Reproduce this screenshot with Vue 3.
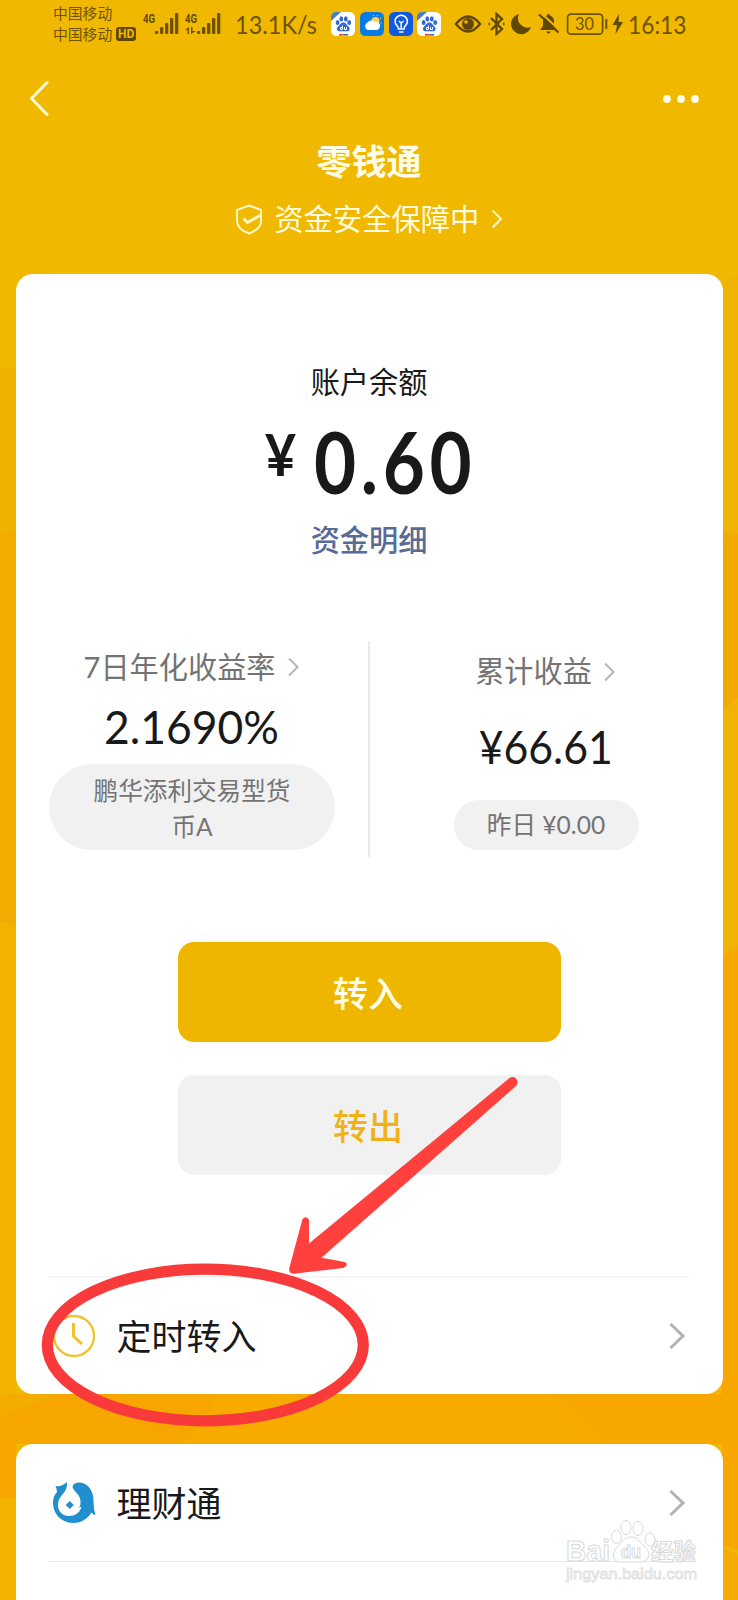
<script setup>
const carriers = ['中国移动', '中国移动']
const bars = [
  { x: 12, h: 3 },
  { x: 17, h: 7 },
  { x: 22, h: 11 },
  { x: 27, h: 16 },
  { x: 32, h: 21 },
]
const apps = ['paw', 'weather', 'bulb', 'paw']
</script>

<template>
  <div class="page">
    <svg class="backdrop" viewBox="0 0 738 1600">
      <rect width="738" height="1600" fill="#f1b800" />
      <path d="M0 367H16V540L0 535z" fill="#f0b200" />
      <path d="M0 535L16 531V926L0 921z" fill="#f2ab00" />
      <path d="M0 921L16 926V1390L0 1416z" fill="#f2b300" />
      <path d="M0 1417L80 1394H738V1444H0z" fill="#f7aa00" />
      <path d="M0 1417L16 1412V1499L0 1498z" fill="#f8a500" />
      <path d="M0 1394H219L185 1444H0z" fill="#f7a600" />
      <path d="M0 1394H60L0 1417z" fill="#f3ac00" />
      <path d="M0 1498H16V1600H0z" fill="#f2b200" />
      <path d="M722 282L738 276V534H722z" fill="#f0b300" />
      <path d="M722 533L738 534V698L722 713z" fill="#f1ab00" />
      <path d="M722 713L738 698V948L722 956z" fill="#f1b300" />
      <path d="M722 956L738 948V1550L722 1545z" fill="#f8a700" />
      <path d="M722 1545L738 1556V1600H722z" fill="#f7ab00" />
      <path d="M555 1394H738V1444H604z" fill="#f8a700" />
    </svg>

    <header class="status">
      <div class="carriers">
        <div v-for="(name, i) in carriers" :key="i" class="carrier">
          <span>{{ name }}</span><b v-if="i === 1">HD</b>
        </div>
      </div>
      <svg v-for="n in 2" :key="n" class="signal" :class="'signal-' + n" width="36" height="26" viewBox="0 0 36 26">
        <text x="0" y="13.500" textLength="12" lengthAdjust="spacingAndGlyphs">4G</text>
        <rect v-for="b in bars" :key="b.x" :x="b.x" :y="25 - b.h" width="3.300" :height="b.h" rx="1" />
        <path v-if="n === 2" d="M0 21L4 18V25H2.500V21zM6 18H7.500V22H11L6 25z" />
      </svg>
      <span class="speed">13.1K/s</span>
      <div class="apps">
        <svg v-for="(app, i) in apps" :key="i" width="24" height="24" viewBox="0 0 24 24">
          <template v-if="app === 'paw'">
            <rect width="24" height="24" rx="5.500" fill="#fff" />
            <path d="M5 0H10L0 9V5.500Q0 0 5 0z" fill="#4a7ec9" />
            <g fill="#3568d4">
              <ellipse cx="6.600" cy="10.500" rx="1.900" ry="2.500" />
              <ellipse cx="10.300" cy="6.900" rx="1.900" ry="2.600" />
              <ellipse cx="14.800" cy="6.900" rx="1.900" ry="2.600" />
              <ellipse cx="18.200" cy="10.500" rx="1.900" ry="2.500" />
              <path d="M12.300 10.500C15 10.500 15.500 13 17.500 14.500C20 17 18 19.500 16 19.300H9C6 19.500 5 17 7 14.800C9 13 9.500 10.500 12.300 10.500z" />
            </g>
            <path d="M11.500 13.500V17.500H9.500V15.500H11.500M13.500 15V17.500H15.500V15" fill="none" stroke="#fff" />
            <path d="M8 22h4.500v1.600H8z" fill="#d83b3b" /><path d="M12.500 22h4.500v1.600h-4.500z" fill="#3568d4" />
          </template>
          <template v-else-if="app === 'weather'">
            <rect width="24" height="24" rx="5.500" fill="#087ce5" />
            <circle cx="15.500" cy="9" r="4" fill="#ffd15b" />
            <path d="M13 4l1-1M17 4l.5-1M20 7l1-1M20.500 11h1" stroke="#ffd15b" />
            <path d="M8 18a4 4 0 0 1-.5-7.500A5 5 0 0 1 15 10a3.500 3.500 0 0 1 2 8z" fill="#fff" />
          </template>
          <template v-else>
            <rect width="24" height="24" rx="5.500" fill="#1259e2" />
            <path d="M9.500 17C9.500 13.500 6 13 6 9.500A6.200 6.200 0 0 1 18.400 9.500C18.400 13 15 13.500 15 17zM10 20H14.500M12.200 16V11L9.800 9M12.200 11L14.600 9" fill="none" stroke="#fff" stroke-width="1.500" />
          </template>
        </svg>
      </div>
      <svg class="glyphs" width="154" height="26" viewBox="454 12 154 26">
        <path d="M456 24Q468 9 480 24Q468 39 456 24z" fill="none" stroke="#604800" stroke-width="2.400" />
        <circle cx="468" cy="24" r="6" fill="#604800" /><circle cx="466" cy="22" r="1.800" fill="#f1b800" />
        <path d="M491 18L502 29L496.500 34V14L502 19L491 30M488.500 24h1.500M503 24h1.500" fill="none" stroke="#604800" stroke-width="2.300" />
        <path d="M519 14A10.200 10.200 0 1 0 531 27A9.500 9.500 0 0 1 519 14z" fill="#604800" />
        <path d="M540 30L543 26V21Q543 16 547 15.500Q548.500 12 550 15.500Q554 17 554 21V26L557 30zM546 31.500H551Q548.500 35.500 546 31.500z" fill="#604800" />
        <path d="M541 13L560 30.500" stroke="#f1b800" stroke-width="2" /><path d="M539 14.500L558.500 32.500" stroke="#604800" stroke-width="2.200" />
        <rect x="567.600" y="14.200" width="35" height="20" rx="3.500" fill="none" stroke="#705300" stroke-width="1.700" />
        <path d="M606.300 19V29" stroke="#705300" stroke-width="2" />
        <text x="575" y="30.300" textLength="19" lengthAdjust="spacingAndGlyphs">30</text>
      </svg>
      <svg class="bolt" width="12" height="20" viewBox="0 0 12 20"><path d="M7 0L0.500 11H5L3.500 20L11 8H6.500z" fill="#604800" /></svg>
      <span class="clock">16:13</span>
    </header>

    <nav class="nav">
      <svg width="20" height="38" viewBox="0 0 20 38"><path d="M18 2.500L2.500 18.500L18 34.500" /></svg>
      <svg width="38" height="10" viewBox="0 0 38 10"><g fill="#fffde8"><circle cx="5" cy="5" r="3.900" /><circle cx="19" cy="5" r="3.900" /><circle cx="33" cy="5" r="3.900" /></g></svg>
    </nav>

    <h1>零钱通</h1>
    <div class="safe">
      <svg width="28" height="31" viewBox="0 0 28 31"><path d="M14 1.500L26 6V17Q26 25 14 29.500Q2 25 2 17V6z" /><path class="tick" d="M8.500 14.500L12.500 18.500L25 11.500" /></svg>
      <span>资金安全保障中</span>
      <svg width="12" height="20" viewBox="0 0 12 20"><path d="M1.500 1.500L10 10L1.500 18.500" /></svg>
    </div>

    <main class="card balance">
      <div class="label">账户余额</div>
      <div class="amount"><span class="yen">¥</span><span class="num">0.60</span></div>
      <div class="detail">资金明细</div>

      <section class="stats">
        <div class="stat left">
          <div class="head"><span>7日年化收益率</span><svg width="11" height="20" viewBox="0 0 11 20"><path d="M1 1.500L9.500 10L1 18.500" /></svg></div>
          <div class="value">2.1690%</div>
          <div class="pill">鹏华添利交易型货<br>币A</div>
        </div>
        <div class="stat right">
          <div class="head"><span>累计收益</span><svg width="11" height="20" viewBox="0 0 11 20"><path d="M1 1.500L9.500 10L1 18.500" /></svg></div>
          <div class="value">¥66.61</div>
          <div class="pill">昨日 ¥0.00</div>
        </div>
      </section>

      <button class="btn primary">转入</button>
      <button class="btn plain">转出</button>

      <div class="row first">
        <svg class="icon" width="44" height="44" viewBox="0 0 44 44"><circle cx="22" cy="22" r="20" fill="none" stroke="#efc32c" stroke-width="2.300" /><path d="M21.500 9V22L30 30" fill="none" stroke="#efc32c" stroke-width="3" /></svg>
        <span>定时转入</span>
        <svg class="chev" width="18" height="28" viewBox="0 0 18 28"><path d="M2.500 2L15 14L2.500 26" /></svg>
      </div>
    </main>

    <section class="card wealth">
      <div class="row">
        <svg class="icon" width="44" height="44" viewBox="0 0 44 44">
          <path fill="#218fce" d="M3.500 5Q10 6 15 1C15.500 9 11.500 12 8.500 16C3.500 23 6 34.500 16.500 35C23 35 28 32 29.500 25.500L27 27Q29 24 28.500 20C28 13 22 11 20.500 6Q21 1.500 28 1.500C37 2.500 42 11 41.500 21Q41.500 28 43.500 34Q41 33.500 39.500 31.500C35 39 28 42 21 42C8 41.500 1 32 1 22Q1 15 5 11Q5 8 3.500 5z" />
          <path d="M17.800 20.500L21.300 24L17.800 27.500L14.300 24z" fill="#218fce" stroke="#218fce" stroke-width="1" stroke-linejoin="round" />
        </svg>
        <span>理财通</span>
        <svg class="chev" width="18" height="28" viewBox="0 0 18 28"><path d="M2.500 2L15 14L2.500 26" /></svg>
      </div>
    </section>

    <svg class="markup" viewBox="0 0 738 1600">
      <ellipse cx="205.300" cy="1345" rx="158" ry="75.800" fill="none" stroke="#f83b3a" stroke-width="11.200" />
      <path fill="#ff413d" d="M509.500 1078L309 1243.500V1220Q307 1215 302.500 1219L289.300 1268Q288.500 1274 294 1273.700L343 1268Q349.500 1265 345 1262L321.500 1257.700L516.500 1085.500C520 1080 514 1074.500 509.500 1078z" />
    </svg>

    <svg class="watermark" width="140" height="76" viewBox="0 0 140 76">
      <g fill="#fff" stroke="#d9d9d9" stroke-width="1">
        <text class="wm-bold" x="1" y="42" font-size="29" textLength="44" lengthAdjust="spacingAndGlyphs">Bai</text>
        <ellipse cx="51.500" cy="18" rx="5" ry="6.500" /><ellipse cx="61" cy="8.500" rx="5" ry="7" />
        <ellipse cx="73" cy="9.500" rx="5" ry="7" /><ellipse cx="85" cy="20.500" rx="5" ry="6.500" />
        <path d="M66 18C73 18 74 23 80 28C88 35 82 43 76 43H55C48 43 46 35 52 28C58 23 59 18 66 18z" />
        <text class="wm-bold" x="56" y="39" font-size="18" textLength="20" lengthAdjust="spacingAndGlyphs">du</text>
        <text class="wm-cjk" x="86" y="40.500" font-size="22.500" textLength="45">经验</text>
      </g>
      <text class="wm-url" x="1" y="60" font-size="15" textLength="131" lengthAdjust="spacingAndGlyphs">jingyan.baidu.com</text>
    </svg>
  </div>
</template>

<style>
body { margin: 0; }
</style>

<style scoped>
.page {
  position: relative;
  width: 738px;
  height: 1600px;
  overflow: hidden;
  display: flex;
  flex-direction: column;
  background: #f1b800;
  color: #191919;
  font-family: Lato, "Noto Sans CJK SC", sans-serif;
}
.page > * { flex: none; position: relative; box-sizing: border-box; }
svg { display: block; flex: none; }
.page > .backdrop, .page > .markup { position: absolute; left: 0; top: 0; width: 738px; height: 1600px; }
.status { height: 50px; display: flex; align-items: flex-start; padding-left: 53px; color: #705300; }
.carriers { width: 90px; padding-top: 1.500px; }
.carrier { display: flex; align-items: center; height: 21.500px; font: 14.800px/21.500px "Noto Sans CJK SC", sans-serif; white-space: nowrap; }
.carrier b { margin-left: 4px; width: 20px; height: 14px; border-radius: 3px; background: #604800; color: #f1b800; font: bold 12px/14px Roboto, sans-serif; text-align: center; }
.signal { margin-top: 9px; fill: #705300; font: bold 13.500px Roboto, sans-serif; }
.signal text { fill: #604800; }
.signal-2 { margin-left: 6px; }
.speed, .clock { font: 25px/30px Lato, sans-serif; margin-top: 9px; white-space: nowrap; transform-origin: left center; }
.speed { margin-left: 14px; width: 96px; transform: scaleX(.94); }
.apps { display: flex; gap: 4.800px; margin-top: 12px; }
.glyphs { margin: 12px 0 0 12.500px; font: 18px Lato, sans-serif; fill: #705300; }
.bolt { margin: 14px 0 0 4.500px; }
.clock { margin-left: 4px; transform: scaleX(.91); }
.nav { height: 64px; margin-top: 17px; padding: 0 38px 0 28.500px; display: flex; align-items: center; justify-content: space-between; }
.nav path { fill: none; stroke: #fffbd2; stroke-width: 3; stroke-linecap: round; stroke-linejoin: round; }
h1 { margin: 4.500px 0 1.500px; height: 50px; color: #fffde8; font-size: 35px; line-height: 50px; font-weight: 700; text-align: center; }
.safe { height: 40px; margin-top: 12px; display: flex; align-items: center; justify-content: center; color: #fffbdc; font-size: 29.300px; line-height: 40px; }
.safe span { margin: 0 11.500px 0 11px; }
.safe path { fill: none; stroke: #fff7c4; stroke-width: 2; }
.safe .tick { stroke-width: 3; }
.card { margin: 0 15.500px; background: #fff; }
.balance { height: 1120.500px; margin-top: 34.500px; border-radius: 17px; padding: 84px 33.500px 0; display: flex; flex-direction: column; align-items: center; }
.label { font-size: 29.200px; line-height: 48px; height: 48px; }
.amount { display: flex; align-items: flex-start; height: 104px; font-weight: 700; }
.yen { font: 700 57px/60px Lato, sans-serif; margin: 18.500px 17px 0 0; width: 33px; transform: scaleX(.95); }
.num { width: 160px; font: 700 85.500px/104px Lato, sans-serif; margin-top: 3.500px; letter-spacing: 5.500px; transform: scaleX(.85); transform-origin: left center; white-space: nowrap; }
.detail { font-size: 29.200px; font-weight: 500; line-height: 48px; height: 48px; margin-top: 6px; color: #576b95; }
.stats { width: 640px; height: 216px; margin-top: 77.500px; display: flex; flex: none; }
.stat { display: flex; flex-direction: column; align-items: center; white-space: nowrap; }
.left { width: 286px; padding-right: 33px; border-right: 2px solid #e9e9e9; }
.right { flex: 1; padding-left: 33px; }
.head { display: flex; align-items: center; height: 40px; color: #737373; font-size: 29.200px; line-height: 40px; margin-top: 5.500px; }
.head svg { margin-left: 12px; margin-top: 1px; margin-right: 2px; }
.head path { fill: none; stroke: #b5b5b5; stroke-width: 2; }
.value { font: 47px/60px Lato, sans-serif; height: 60px; margin-top: 9.500px; transform: scaleX(.945); }
.pill { width: 286px; height: 86px; box-sizing: border-box; border-radius: 43px; background: #f1f1f1; color: #747474; font-size: 24.600px; line-height: 36.500px; padding-top: 8.500px; text-align: center; margin-top: 8px; }
.right .head { margin-top: 10px; }
.right .value { margin-top: 25px; transform: scaleX(.91); }
.right .pill { width: 185px; height: 50px; line-height: 49px; padding: 0; margin-top: 24px; }
.btn { width: 383px; height: 100px; flex: none; border: 0; border-radius: 16px; padding: 2px 2px 0 0; font: 500 35px/98px Lato, "Noto Sans CJK SC", sans-serif; }
.primary { margin-top: 84.500px; background: #efb600; color: #fffde8; }
.plain { margin-top: 33.500px; background: #f1f1f1; color: #efb21a; }
.row { display: flex; align-items: center; width: 640px; height: 117px; font-size: 35px; line-height: 50px; padding: 0 3.500px 0 3px; box-sizing: border-box; }
.row span { margin-left: 20.500px; flex: 1; padding-top: 1px; }
.row svg { margin-top: 1px; }
.chev path { fill: none; stroke: #b2b2b2; stroke-width: 3; }
.first { margin-top: 100.500px; height: 120px; border-top: 2px solid #f5f5f5; }
.wealth { margin-top: 50px; height: 156px; border-radius: 17px 17px 0 0; padding: 0 33.500px; }
.wealth .row { height: 118px; border-bottom: 1.500px solid #e6e6e6; }
.page > .watermark { position: absolute; left: 565px; top: 1519px; }
.wm-bold { font-family: "Liberation Sans", sans-serif; font-weight: 700; }
.wm-cjk { font-family: "Noto Sans CJK SC", sans-serif; font-weight: 700; }
.wm-url { font-family: "Liberation Sans", sans-serif; fill: #fff; stroke: #dedede; stroke-width: .8px; }
</style>
